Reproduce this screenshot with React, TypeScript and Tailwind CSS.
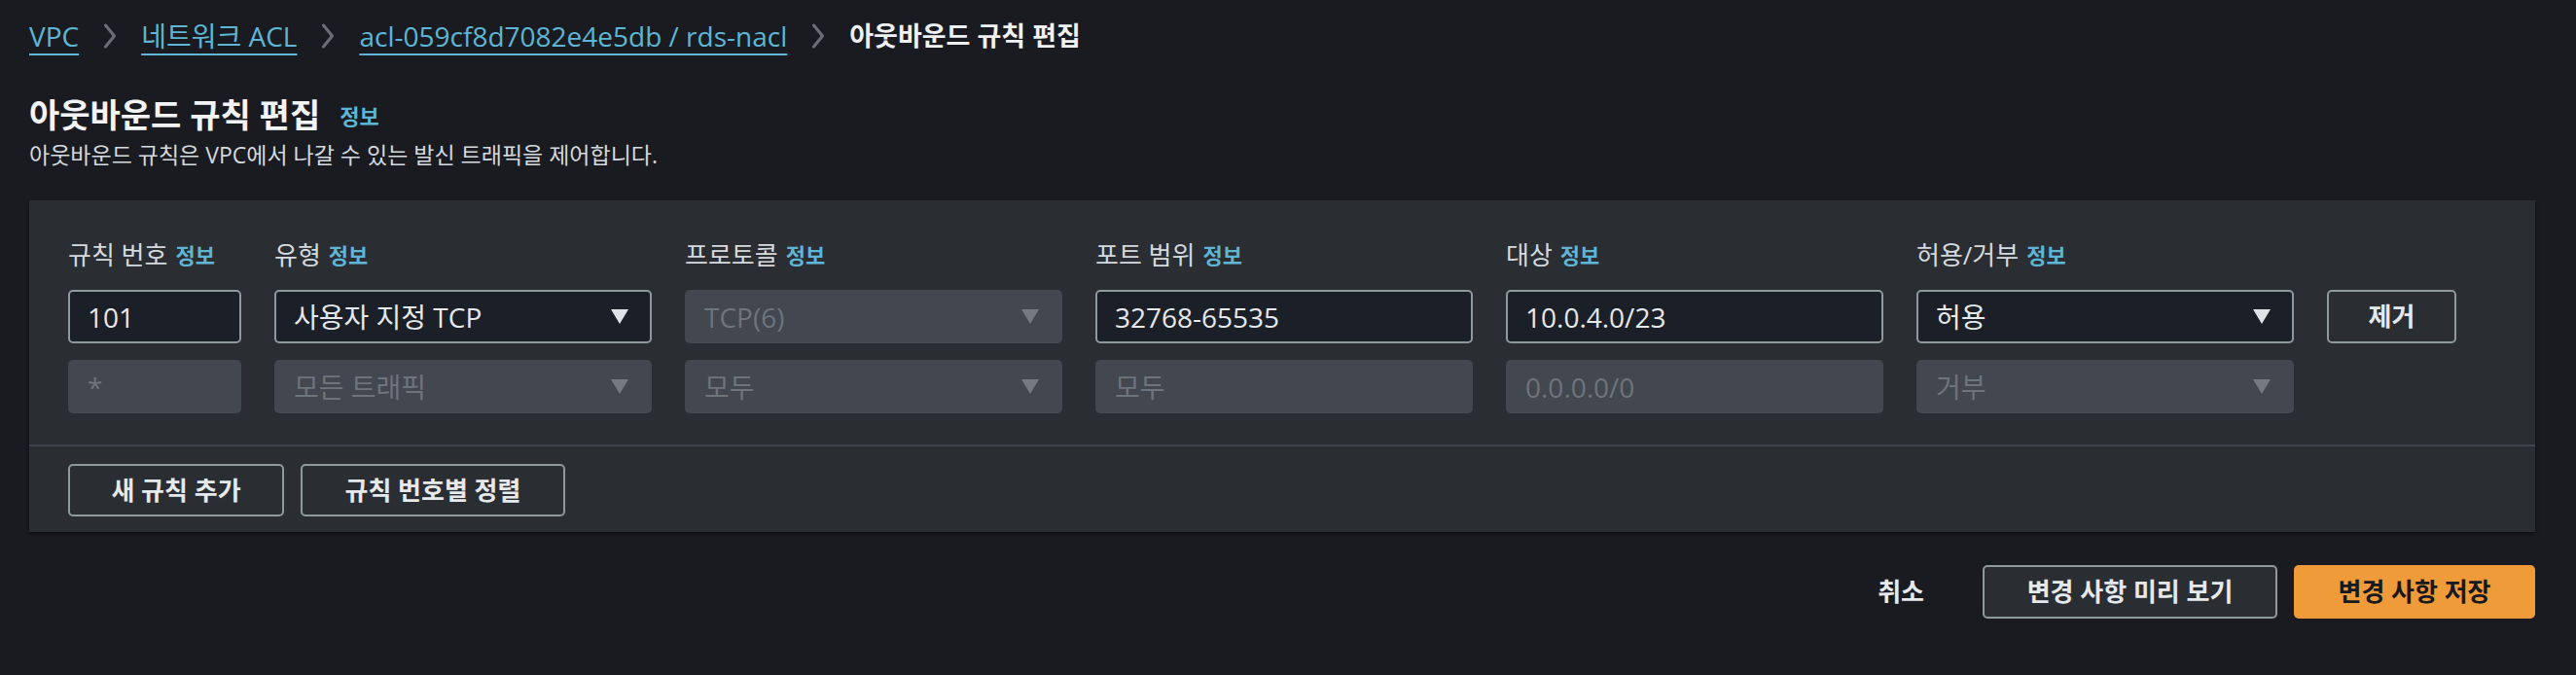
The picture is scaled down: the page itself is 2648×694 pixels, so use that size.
import React from "react";

const font = { fontFamily: "'Open Sans', 'Noto Sans CJK KR', sans-serif" };

function Chevron() {
  return (
    <svg width="14" height="26" viewBox="0 0 14 26" fill="none" className="shrink-0">
      <path d="M2.5 2 L11.5 13 L2.5 24" stroke="#6b6e74" strokeWidth="3" strokeLinecap="round" strokeLinejoin="round" />
    </svg>
  );
}

function Caret({ dim }: { dim?: boolean }) {
  return (
    <svg width="18" height="15" viewBox="0 0 18 15" className="shrink-0">
      <polygon points="0,0 18,0 9,15" fill={dim ? "#747a83" : "#dfe3e6"} />
    </svg>
  );
}

function Label({ text }: { text: string }) {
  return (
    <div className="mb-[3px] flex h-[32px] items-center text-[26px] text-[#d5dadf]">
      {text}
      <span className="ml-[8px] text-[22px] font-bold text-[#5fb6d4]">정보</span>
    </div>
  );
}

function Field({ value, select }: { value: string; select?: boolean }) {
  return (
    <div className="flex h-[55px] items-center justify-between rounded-[5px] border-2 border-[#8f9a9b] bg-[#1b1f27] pl-[18px] pr-[22px] text-[28px] text-[#e6e9ec]">
      <span>{value}</span>
      {select && <Caret />}
    </div>
  );
}

function Disabled({ value, select }: { value: string; select?: boolean }) {
  return (
    <div className="flex h-[55px] items-center justify-between rounded-[5px] bg-[#424750] pl-[20px] pr-[24px] text-[28px] text-[#6e747c]">
      <span>{value}</span>
      {select && <Caret dim />}
    </div>
  );
}

const outline =
  "rounded-[5px] border-2 border-[#8f9a9b] text-[26px] font-bold text-[#e6e9ec]";

export default function App() {
  const crumbs = ["VPC", "네트워크 ACL", "acl-059cf8d7082e4e5db / rds-nacl"];
  return (
    <main className="min-h-[694px] w-full bg-[#1a1b20] pl-[30px] pr-[42px]" style={font}>
      <nav className="box-content flex h-[46px] items-center gap-[25px] pt-[14px] text-[28px]">
        {crumbs.map((c) => (
          <React.Fragment key={c}>
            <a href="#" className="text-[#5fb6d4] underline decoration-2 underline-offset-[7px]">
              {c}
            </a>
            <Chevron />
          </React.Fragment>
        ))}
        <span className="text-[27px] font-bold text-[#eef0f2]">아웃바운드 규칙 편집</span>
      </nav>

      <div className="mt-[38px] flex h-[40px] items-center">
        <h1 className="text-[34px] font-bold text-[#f2f3f4]">아웃바운드 규칙 편집</h1>
        <span className="ml-[20px] mt-[2px] text-[22px] font-bold text-[#5fb6d4]">정보</span>
      </div>
      <p className="mt-[5px] h-[32px] text-[23px] leading-[32px] text-[#d5dadf]">
        아웃바운드 규칙은 VPC에서 나갈 수 있는 발신 트래픽을 제어합니다.
      </p>

      <section className="mt-[31px] bg-[#2a2d32] shadow-[0_2px_3px_rgba(0,0,0,0.5)]">
        <div className="grid grid-cols-[178px_repeat(5,388px)_133px] gap-x-[34px] gap-y-[17px] px-[40px] pb-[32px] pt-[40px]">
          <Label text="규칙 번호" />
          <Label text="유형" />
          <Label text="프로토콜" />
          <Label text="포트 범위" />
          <Label text="대상" />
          <Label text="허용/거부" />
          <div />

          <Field value="101" />
          <Field value="사용자 지정 TCP" select />
          <Disabled value="TCP(6)" select />
          <Field value="32768-65535" />
          <Field value="10.0.4.0/23" />
          <Field value="허용" select />
          <button className={`h-[55px] ${outline}`}>제거</button>

          <Disabled value="*" />
          <Disabled value="모든 트래픽" select />
          <Disabled value="모두" select />
          <Disabled value="모두" />
          <Disabled value="0.0.0.0/0" />
          <Disabled value="거부" select />
          <div />
        </div>

        <div className="flex gap-[17px] border-t-2 border-[#3f444c] px-[40px] pb-[16px] pt-[18px]">
          <button className={`h-[54px] w-[222px] ${outline}`}>새 규칙 추가</button>
          <button className={`h-[54px] w-[272px] ${outline}`}>규칙 번호별 정렬</button>
        </div>
      </section>

      <div className="mt-[34px] flex items-center justify-end gap-[17px]">
        <button className="mr-[43px] text-[26px] font-bold text-[#e6e9ec]">취소</button>
        <button className={`h-[55px] w-[303px] bg-[#2a2d32] ${outline}`}>변경 사항 미리 보기</button>
        <button className="h-[55px] w-[248px] rounded-[5px] bg-[#f09b3a] text-[26px] font-bold text-[#16191f]">
          변경 사항 저장
        </button>
      </div>
    </main>
  );
}
